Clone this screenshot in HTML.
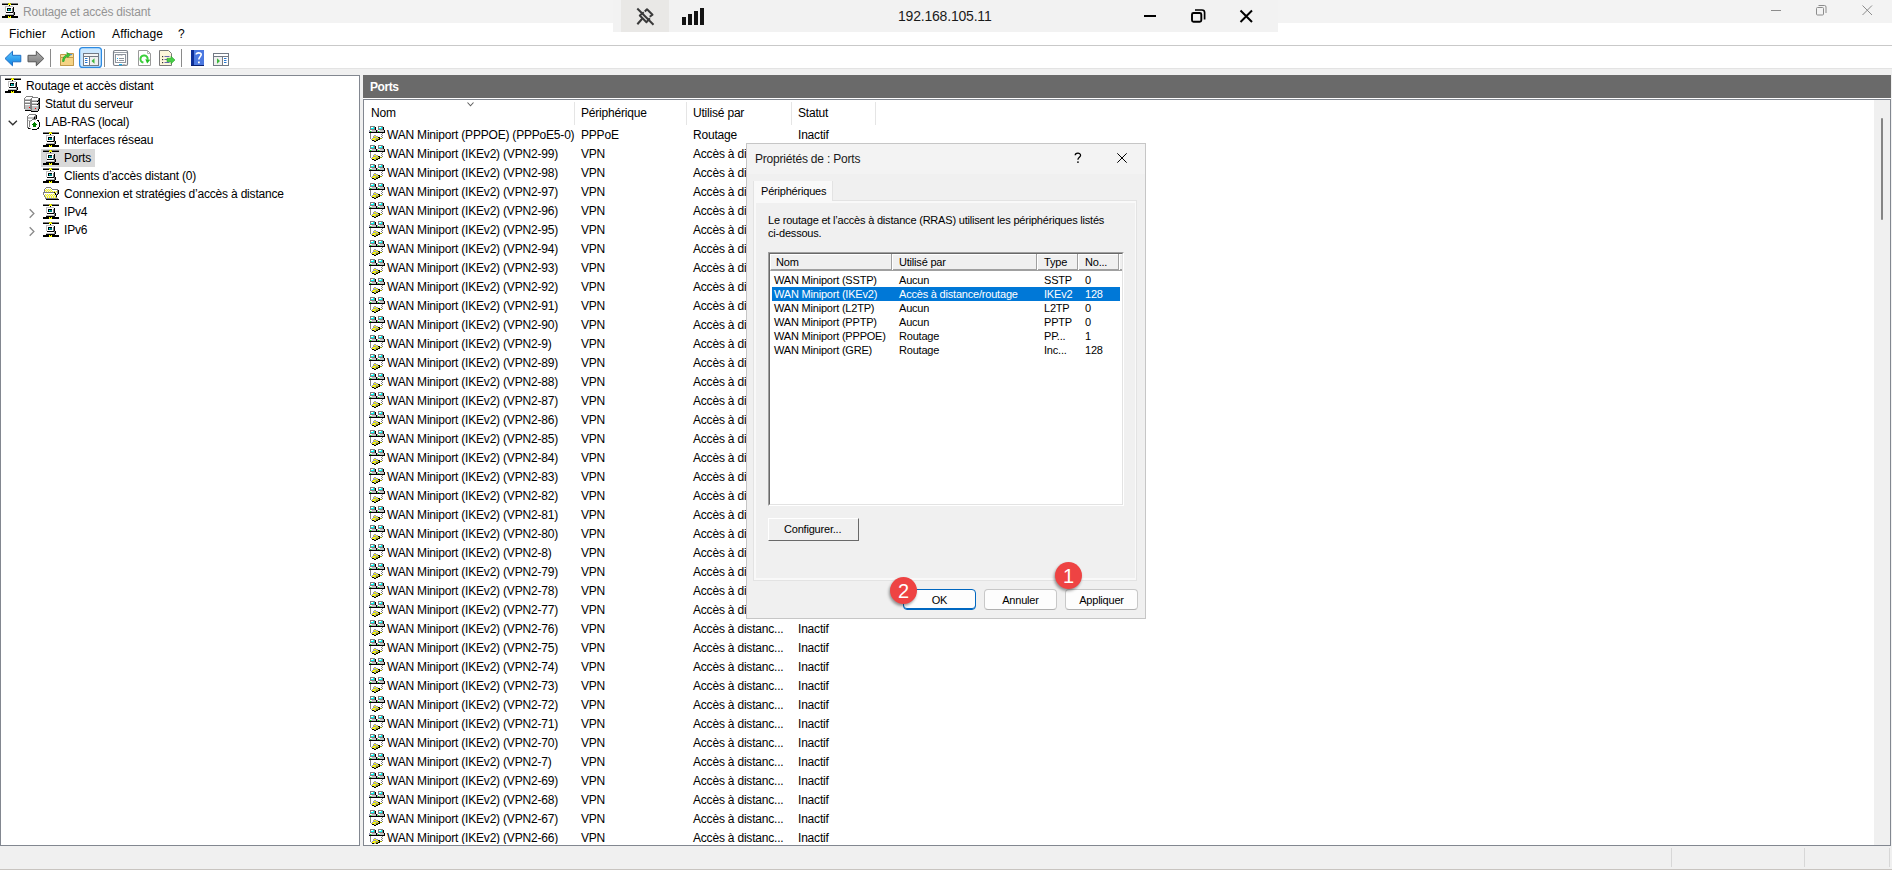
<!DOCTYPE html><html><head><meta charset="utf-8"><style>
*{margin:0;padding:0;box-sizing:border-box}
html,body{width:1892px;height:870px;overflow:hidden;background:#f0f0f0;font-family:"Liberation Sans",sans-serif;font-size:12px;color:#000}
.a{position:absolute}
.t{position:absolute;white-space:nowrap;line-height:16px;letter-spacing:-0.2px;font-variant-ligatures:none}
svg{position:absolute;overflow:visible}
</style></head><body>
<svg width="0" height="0" style="position:absolute">
<defs>
<symbol id="rras" viewBox="0 0 16 16" shape-rendering="crispEdges"><rect x="0" y="1" width="6" height="1" fill="#808080"/><rect x="6" y="1" width="1" height="1" fill="#a0a000"/><rect x="7" y="1" width="1" height="1" fill="#ffff00"/><rect x="8" y="1" width="1" height="1" fill="#a0a000"/><rect x="9" y="1" width="7" height="1" fill="#808080"/><rect x="0" y="2" width="6" height="1" fill="#000"/><rect x="6" y="2" width="3" height="1" fill="#ffff00"/><rect x="9" y="2" width="7" height="1" fill="#000"/><rect x="7" y="3" width="1" height="1" fill="#000"/><rect x="3" y="4" width="8" height="1" fill="#c0c0c0"/><rect x="3" y="5" width="1" height="1" fill="#c0c0c0"/><rect x="4" y="5" width="7" height="1" fill="#fff"/><rect x="11" y="5" width="1" height="1" fill="#000"/><rect x="3" y="6" width="1" height="1" fill="#c0c0c0"/><rect x="4" y="6" width="1" height="1" fill="#fff"/><rect x="5" y="6" width="4" height="1" fill="#000"/><rect x="9" y="6" width="1" height="1" fill="#fff"/><rect x="10" y="6" width="1" height="1" fill="#808080"/><rect x="11" y="6" width="1" height="1" fill="#000"/><rect x="3" y="7" width="1" height="1" fill="#c0c0c0"/><rect x="4" y="7" width="1" height="1" fill="#fff"/><rect x="5" y="7" width="1" height="1" fill="#000"/><rect x="6" y="7" width="1" height="1" fill="#00ffff"/><rect x="7" y="7" width="2" height="1" fill="#008080"/><rect x="9" y="7" width="1" height="1" fill="#fff"/><rect x="10" y="7" width="1" height="1" fill="#808080"/><rect x="11" y="7" width="1" height="1" fill="#000"/><rect x="3" y="8" width="1" height="1" fill="#c0c0c0"/><rect x="4" y="8" width="1" height="1" fill="#fff"/><rect x="5" y="8" width="1" height="1" fill="#000"/><rect x="6" y="8" width="3" height="1" fill="#008080"/><rect x="9" y="8" width="1" height="1" fill="#fff"/><rect x="10" y="8" width="1" height="1" fill="#808080"/><rect x="11" y="8" width="1" height="1" fill="#000"/><rect x="3" y="9" width="1" height="1" fill="#c0c0c0"/><rect x="4" y="9" width="6" height="1" fill="#fff"/><rect x="10" y="9" width="1" height="1" fill="#808080"/><rect x="11" y="9" width="1" height="1" fill="#000"/><rect x="4" y="10" width="7" height="1" fill="#000"/><rect x="11" y="10" width="1" height="1" fill="#808080"/><rect x="12" y="10" width="1" height="1" fill="#000"/><rect x="4" y="11" width="7" height="1" fill="#fff"/><rect x="11" y="11" width="1" height="1" fill="#808080"/><rect x="12" y="11" width="1" height="1" fill="#000"/><rect x="3" y="12" width="8" height="1" fill="#c0c0c0"/><rect x="11" y="12" width="1" height="1" fill="#808080"/><rect x="12" y="12" width="1" height="1" fill="#000"/><rect x="3" y="13" width="9" height="1" fill="#000"/><rect x="0" y="14" width="6" height="1" fill="#000"/><rect x="6" y="14" width="1" height="1" fill="#ffff00"/><rect x="7" y="14" width="1" height="1" fill="#000"/><rect x="8" y="14" width="1" height="1" fill="#ffff00"/><rect x="9" y="14" width="7" height="1" fill="#000"/><rect x="0" y="15" width="6" height="1" fill="#000"/><rect x="6" y="15" width="3" height="1" fill="#ffff00"/><rect x="9" y="15" width="7" height="1" fill="#000"/></symbol><symbol id="port" viewBox="0 0 16 17" shape-rendering="crispEdges"><rect x="1" y="1" width="5" height="1" fill="#808080"/><rect x="9" y="1" width="5" height="1" fill="#808080"/><rect x="1" y="2" width="1" height="1" fill="#808080"/><rect x="2" y="2" width="2" height="1" fill="#fff"/><rect x="4" y="2" width="1" height="1" fill="#00ffff"/><rect x="5" y="2" width="1" height="1" fill="#808080"/><rect x="6" y="2" width="1" height="1" fill="#000"/><rect x="9" y="2" width="1" height="1" fill="#808080"/><rect x="10" y="2" width="2" height="1" fill="#fff"/><rect x="12" y="2" width="1" height="1" fill="#00ffff"/><rect x="13" y="2" width="1" height="1" fill="#808080"/><rect x="14" y="2" width="1" height="1" fill="#000"/><rect x="1" y="3" width="1" height="1" fill="#808080"/><rect x="2" y="3" width="3" height="1" fill="#00ffff"/><rect x="5" y="3" width="1" height="1" fill="#808080"/><rect x="6" y="3" width="1" height="1" fill="#000"/><rect x="9" y="3" width="1" height="1" fill="#808080"/><rect x="10" y="3" width="3" height="1" fill="#00ffff"/><rect x="13" y="3" width="1" height="1" fill="#808080"/><rect x="14" y="3" width="1" height="1" fill="#000"/><rect x="1" y="4" width="5" height="1" fill="#808080"/><rect x="6" y="4" width="1" height="1" fill="#000"/><rect x="9" y="4" width="5" height="1" fill="#808080"/><rect x="14" y="4" width="1" height="1" fill="#000"/><rect x="0" y="5" width="1" height="1" fill="#9a9ab8"/><rect x="1" y="5" width="2" height="1" fill="#fff"/><rect x="3" y="5" width="4" height="1" fill="#c0c0c0"/><rect x="7" y="5" width="1" height="1" fill="#000"/><rect x="8" y="5" width="1" height="1" fill="#9a9ab8"/><rect x="9" y="5" width="2" height="1" fill="#fff"/><rect x="11" y="5" width="4" height="1" fill="#c0c0c0"/><rect x="15" y="5" width="1" height="1" fill="#000"/><rect x="0" y="6" width="1" height="1" fill="#9a9ab8"/><rect x="1" y="6" width="1" height="1" fill="#00ff00"/><rect x="2" y="6" width="1" height="1" fill="#9a9ab8"/><rect x="3" y="6" width="4" height="1" fill="#c0c0c0"/><rect x="7" y="6" width="1" height="1" fill="#000"/><rect x="8" y="6" width="1" height="1" fill="#9a9ab8"/><rect x="9" y="6" width="1" height="1" fill="#00ff00"/><rect x="10" y="6" width="1" height="1" fill="#9a9ab8"/><rect x="11" y="6" width="4" height="1" fill="#c0c0c0"/><rect x="15" y="6" width="1" height="1" fill="#000"/><rect x="0" y="7" width="16" height="1" fill="#000"/><rect x="1" y="8" width="1" height="1" fill="#808080"/><rect x="13" y="8" width="1" height="1" fill="#808080"/><rect x="1" y="9" width="1" height="1" fill="#808080"/><rect x="12" y="9" width="1" height="1" fill="#808080"/><rect x="1" y="10" width="1" height="1" fill="#808080"/><rect x="5" y="10" width="2" height="1" fill="#9a9ab8"/><rect x="13" y="10" width="1" height="1" fill="#808080"/><rect x="1" y="11" width="1" height="1" fill="#808080"/><rect x="4" y="11" width="1" height="1" fill="#9a9ab8"/><rect x="5" y="11" width="2" height="1" fill="#ffff00"/><rect x="7" y="11" width="2" height="1" fill="#9a9ab8"/><rect x="12" y="11" width="1" height="1" fill="#808080"/><rect x="1" y="12" width="1" height="1" fill="#808080"/><rect x="4" y="12" width="3" height="1" fill="#9a9ab8"/><rect x="7" y="12" width="2" height="1" fill="#ffff00"/><rect x="9" y="12" width="2" height="1" fill="#000"/><rect x="13" y="12" width="1" height="1" fill="#808080"/><rect x="1" y="13" width="1" height="1" fill="#808080"/><rect x="3" y="13" width="1" height="1" fill="#9a9ab8"/><rect x="4" y="13" width="3" height="1" fill="#ffff00"/><rect x="7" y="13" width="2" height="1" fill="#9a9ab8"/><rect x="9" y="13" width="1" height="1" fill="#ffff00"/><rect x="10" y="13" width="1" height="1" fill="#000"/><rect x="11" y="13" width="2" height="1" fill="#a0a000"/><rect x="2" y="14" width="1" height="1" fill="#9a9ab8"/><rect x="3" y="14" width="3" height="1" fill="#ffff00"/><rect x="6" y="14" width="1" height="1" fill="#9a9ab8"/><rect x="7" y="14" width="2" height="1" fill="#a0a000"/><rect x="9" y="14" width="2" height="1" fill="#000"/><rect x="3" y="15" width="2" height="1" fill="#000"/><rect x="5" y="15" width="1" height="1" fill="#9a9ab8"/><rect x="6" y="15" width="1" height="1" fill="#ffff00"/><rect x="7" y="15" width="2" height="1" fill="#000"/><rect x="5" y="16" width="2" height="1" fill="#000"/></symbol><symbol id="srvstat" viewBox="0 0 16 16" shape-rendering="crispEdges"><rect x="2" y="0" width="7" height="1" fill="#808080"/><rect x="1" y="1" width="1" height="1" fill="#808080"/><rect x="2" y="1" width="6" height="1" fill="#fff"/><rect x="8" y="1" width="6" height="1" fill="#808080"/><rect x="0" y="2" width="1" height="1" fill="#808080"/><rect x="1" y="2" width="6" height="1" fill="#fff"/><rect x="7" y="2" width="1" height="1" fill="#808080"/><rect x="8" y="2" width="6" height="1" fill="#fff"/><rect x="14" y="2" width="1" height="1" fill="#808080"/><rect x="15" y="2" width="1" height="1" fill="#000"/><rect x="0" y="3" width="1" height="1" fill="#808080"/><rect x="1" y="3" width="5" height="1" fill="#c0c0c0"/><rect x="6" y="3" width="2" height="1" fill="#808080"/><rect x="8" y="3" width="6" height="1" fill="#fff"/><rect x="14" y="3" width="1" height="1" fill="#808080"/><rect x="15" y="3" width="1" height="1" fill="#000"/><rect x="0" y="4" width="8" height="1" fill="#808080"/><rect x="8" y="4" width="6" height="1" fill="#c0c0c0"/><rect x="14" y="4" width="2" height="1" fill="#000"/><rect x="0" y="5" width="1" height="1" fill="#808080"/><rect x="1" y="5" width="5" height="1" fill="#fff"/><rect x="6" y="5" width="7" height="1" fill="#808080"/><rect x="13" y="5" width="1" height="1" fill="#000"/><rect x="14" y="5" width="1" height="1" fill="#808080"/><rect x="15" y="5" width="1" height="1" fill="#000"/><rect x="0" y="6" width="1" height="1" fill="#808080"/><rect x="1" y="6" width="5" height="1" fill="#c0c0c0"/><rect x="6" y="6" width="2" height="1" fill="#808080"/><rect x="8" y="6" width="6" height="1" fill="#fff"/><rect x="14" y="6" width="1" height="1" fill="#808080"/><rect x="15" y="6" width="1" height="1" fill="#000"/><rect x="0" y="7" width="8" height="1" fill="#808080"/><rect x="8" y="7" width="6" height="1" fill="#c0c0c0"/><rect x="14" y="7" width="2" height="1" fill="#000"/><rect x="0" y="8" width="1" height="1" fill="#808080"/><rect x="1" y="8" width="5" height="1" fill="#fff"/><rect x="6" y="8" width="7" height="1" fill="#808080"/><rect x="13" y="8" width="1" height="1" fill="#000"/><rect x="14" y="8" width="1" height="1" fill="#808080"/><rect x="15" y="8" width="1" height="1" fill="#000"/><rect x="0" y="9" width="1" height="1" fill="#808080"/><rect x="1" y="9" width="5" height="1" fill="#c0c0c0"/><rect x="6" y="9" width="2" height="1" fill="#808080"/><rect x="8" y="9" width="6" height="1" fill="#fff"/><rect x="14" y="9" width="1" height="1" fill="#808080"/><rect x="15" y="9" width="1" height="1" fill="#000"/><rect x="0" y="10" width="1" height="1" fill="#808080"/><rect x="1" y="10" width="5" height="1" fill="#c0c0c0"/><rect x="6" y="10" width="2" height="1" fill="#808080"/><rect x="8" y="10" width="6" height="1" fill="#c0c0c0"/><rect x="14" y="10" width="1" height="1" fill="#808080"/><rect x="15" y="10" width="1" height="1" fill="#000"/><rect x="0" y="11" width="1" height="1" fill="#808080"/><rect x="1" y="11" width="4" height="1" fill="#c0c0c0"/><rect x="5" y="11" width="1" height="1" fill="#ff0000"/><rect x="6" y="11" width="2" height="1" fill="#808080"/><rect x="8" y="11" width="6" height="1" fill="#c0c0c0"/><rect x="14" y="11" width="1" height="1" fill="#808080"/><rect x="15" y="11" width="1" height="1" fill="#000"/><rect x="0" y="12" width="1" height="1" fill="#808080"/><rect x="1" y="12" width="5" height="1" fill="#c0c0c0"/><rect x="6" y="12" width="2" height="1" fill="#808080"/><rect x="8" y="12" width="3" height="1" fill="#c0c0c0"/><rect x="11" y="12" width="1" height="1" fill="#ff0000"/><rect x="12" y="12" width="2" height="1" fill="#c0c0c0"/><rect x="14" y="12" width="1" height="1" fill="#808080"/><rect x="15" y="12" width="1" height="1" fill="#000"/><rect x="1" y="13" width="6" height="1" fill="#c0c0c0"/><rect x="7" y="13" width="1" height="1" fill="#808080"/><rect x="8" y="13" width="6" height="1" fill="#c0c0c0"/><rect x="14" y="13" width="1" height="1" fill="#000"/><rect x="1" y="14" width="6" height="1" fill="#000"/><rect x="7" y="14" width="1" height="1" fill="#808080"/><rect x="8" y="14" width="6" height="1" fill="#c0c0c0"/><rect x="14" y="14" width="1" height="1" fill="#000"/><rect x="7" y="15" width="7" height="1" fill="#000"/></symbol><symbol id="labras" viewBox="0 0 16 16" shape-rendering="crispEdges"><rect x="5" y="0" width="7" height="1" fill="#808080"/><rect x="4" y="1" width="1" height="1" fill="#808080"/><rect x="5" y="1" width="6" height="1" fill="#fff"/><rect x="11" y="1" width="1" height="1" fill="#808080"/><rect x="12" y="1" width="1" height="1" fill="#000"/><rect x="3" y="2" width="1" height="1" fill="#808080"/><rect x="4" y="2" width="6" height="1" fill="#fff"/><rect x="10" y="2" width="2" height="1" fill="#808080"/><rect x="12" y="2" width="1" height="1" fill="#000"/><rect x="3" y="3" width="1" height="1" fill="#808080"/><rect x="4" y="3" width="6" height="1" fill="#c0c0c0"/><rect x="10" y="3" width="1" height="1" fill="#000"/><rect x="11" y="3" width="1" height="1" fill="#808080"/><rect x="12" y="3" width="1" height="1" fill="#000"/><rect x="3" y="4" width="1" height="1" fill="#808080"/><rect x="4" y="4" width="5" height="1" fill="#c0c0c0"/><rect x="9" y="4" width="1" height="1" fill="#808080"/><rect x="10" y="4" width="1" height="1" fill="#000"/><rect x="11" y="4" width="1" height="1" fill="#808080"/><rect x="12" y="4" width="1" height="1" fill="#000"/><rect x="3" y="5" width="1" height="1" fill="#808080"/><rect x="4" y="5" width="4" height="1" fill="#fff"/><rect x="8" y="5" width="4" height="1" fill="#808080"/><rect x="3" y="6" width="1" height="1" fill="#808080"/><rect x="4" y="6" width="3" height="1" fill="#c0c0c0"/><rect x="7" y="6" width="1" height="1" fill="#808080"/><rect x="9" y="6" width="4" height="1" fill="#fff"/><rect x="13" y="6" width="2" height="1" fill="#000"/><rect x="3" y="7" width="1" height="1" fill="#808080"/><rect x="4" y="7" width="1" height="1" fill="#fff"/><rect x="5" y="7" width="1" height="1" fill="#808080"/><rect x="6" y="7" width="1" height="1" fill="#c0c0c0"/><rect x="7" y="7" width="7" height="1" fill="#fff"/><rect x="14" y="7" width="1" height="1" fill="#000"/><rect x="3" y="8" width="1" height="1" fill="#808080"/><rect x="4" y="8" width="1" height="1" fill="#fff"/><rect x="5" y="8" width="1" height="1" fill="#808080"/><rect x="6" y="8" width="4" height="1" fill="#fff"/><rect x="10" y="8" width="1" height="1" fill="#008000"/><rect x="11" y="8" width="4" height="1" fill="#fff"/><rect x="15" y="8" width="1" height="1" fill="#000"/><rect x="3" y="9" width="1" height="1" fill="#808080"/><rect x="4" y="9" width="1" height="1" fill="#fff"/><rect x="5" y="9" width="1" height="1" fill="#808080"/><rect x="6" y="9" width="3" height="1" fill="#fff"/><rect x="9" y="9" width="3" height="1" fill="#008000"/><rect x="12" y="9" width="3" height="1" fill="#fff"/><rect x="15" y="9" width="1" height="1" fill="#000"/><rect x="3" y="10" width="1" height="1" fill="#808080"/><rect x="4" y="10" width="1" height="1" fill="#fff"/><rect x="5" y="10" width="1" height="1" fill="#808080"/><rect x="6" y="10" width="2" height="1" fill="#fff"/><rect x="8" y="10" width="5" height="1" fill="#008000"/><rect x="13" y="10" width="2" height="1" fill="#fff"/><rect x="15" y="10" width="1" height="1" fill="#000"/><rect x="3" y="11" width="1" height="1" fill="#808080"/><rect x="4" y="11" width="1" height="1" fill="#fff"/><rect x="5" y="11" width="1" height="1" fill="#808080"/><rect x="6" y="11" width="3" height="1" fill="#fff"/><rect x="9" y="11" width="3" height="1" fill="#008000"/><rect x="12" y="11" width="3" height="1" fill="#fff"/><rect x="15" y="11" width="1" height="1" fill="#000"/><rect x="3" y="12" width="1" height="1" fill="#808080"/><rect x="4" y="12" width="1" height="1" fill="#fff"/><rect x="5" y="12" width="1" height="1" fill="#808080"/><rect x="6" y="12" width="3" height="1" fill="#fff"/><rect x="9" y="12" width="3" height="1" fill="#008000"/><rect x="12" y="12" width="3" height="1" fill="#fff"/><rect x="15" y="12" width="1" height="1" fill="#000"/><rect x="3" y="13" width="2" height="1" fill="#808080"/><rect x="5" y="13" width="9" height="1" fill="#fff"/><rect x="14" y="13" width="1" height="1" fill="#000"/><rect x="4" y="14" width="2" height="1" fill="#000"/><rect x="6" y="14" width="1" height="1" fill="#808080"/><rect x="7" y="14" width="6" height="1" fill="#fff"/><rect x="13" y="14" width="2" height="1" fill="#000"/><rect x="8" y="15" width="5" height="1" fill="#000"/></symbol><symbol id="folder" viewBox="0 0 16 16" shape-rendering="crispEdges"><rect x="3" y="2" width="5" height="1" fill="#808080"/><rect x="2" y="3" width="1" height="1" fill="#808080"/><rect x="3" y="3" width="5" height="1" fill="#fff"/><rect x="8" y="3" width="1" height="1" fill="#808080"/><rect x="1" y="4" width="1" height="1" fill="#808080"/><rect x="2" y="4" width="1" height="1" fill="#fff"/><rect x="3" y="4" width="1" height="1" fill="#ffff00"/><rect x="4" y="4" width="1" height="1" fill="#e4e4f0"/><rect x="5" y="4" width="1" height="1" fill="#ffff00"/><rect x="6" y="4" width="1" height="1" fill="#e4e4f0"/><rect x="7" y="4" width="1" height="1" fill="#ffff00"/><rect x="8" y="4" width="1" height="1" fill="#fff"/><rect x="9" y="4" width="6" height="1" fill="#808080"/><rect x="1" y="5" width="1" height="1" fill="#808080"/><rect x="2" y="5" width="1" height="1" fill="#ffff00"/><rect x="3" y="5" width="1" height="1" fill="#e4e4f0"/><rect x="4" y="5" width="1" height="1" fill="#ffff00"/><rect x="5" y="5" width="1" height="1" fill="#e4e4f0"/><rect x="6" y="5" width="1" height="1" fill="#ffff00"/><rect x="7" y="5" width="1" height="1" fill="#e4e4f0"/><rect x="8" y="5" width="1" height="1" fill="#ffff00"/><rect x="9" y="5" width="5" height="1" fill="#fff"/><rect x="14" y="5" width="1" height="1" fill="#808080"/><rect x="15" y="5" width="1" height="1" fill="#000"/><rect x="1" y="6" width="1" height="1" fill="#808080"/><rect x="2" y="6" width="1" height="1" fill="#e4e4f0"/><rect x="3" y="6" width="1" height="1" fill="#ffff00"/><rect x="4" y="6" width="1" height="1" fill="#e4e4f0"/><rect x="5" y="6" width="1" height="1" fill="#ffff00"/><rect x="6" y="6" width="1" height="1" fill="#e4e4f0"/><rect x="7" y="6" width="1" height="1" fill="#ffff00"/><rect x="8" y="6" width="1" height="1" fill="#e4e4f0"/><rect x="9" y="6" width="1" height="1" fill="#ffff00"/><rect x="10" y="6" width="1" height="1" fill="#e4e4f0"/><rect x="11" y="6" width="1" height="1" fill="#ffff00"/><rect x="12" y="6" width="1" height="1" fill="#e4e4f0"/><rect x="13" y="6" width="1" height="1" fill="#ffff00"/><rect x="14" y="6" width="1" height="1" fill="#808080"/><rect x="15" y="6" width="1" height="1" fill="#000"/><rect x="0" y="7" width="11" height="1" fill="#808080"/><rect x="11" y="7" width="1" height="1" fill="#000"/><rect x="12" y="7" width="1" height="1" fill="#ffff00"/><rect x="13" y="7" width="1" height="1" fill="#e4e4f0"/><rect x="14" y="7" width="1" height="1" fill="#808080"/><rect x="15" y="7" width="1" height="1" fill="#000"/><rect x="0" y="8" width="1" height="1" fill="#808080"/><rect x="1" y="8" width="10" height="1" fill="#fff"/><rect x="11" y="8" width="1" height="1" fill="#ffff00"/><rect x="12" y="8" width="1" height="1" fill="#000"/><rect x="13" y="8" width="1" height="1" fill="#fff"/><rect x="14" y="8" width="1" height="1" fill="#808080"/><rect x="15" y="8" width="1" height="1" fill="#000"/><rect x="0" y="9" width="1" height="1" fill="#808080"/><rect x="1" y="9" width="1" height="1" fill="#fff"/><rect x="2" y="9" width="1" height="1" fill="#ffff00"/><rect x="3" y="9" width="1" height="1" fill="#e4e4f0"/><rect x="4" y="9" width="1" height="1" fill="#ffff00"/><rect x="5" y="9" width="1" height="1" fill="#e4e4f0"/><rect x="6" y="9" width="1" height="1" fill="#ffff00"/><rect x="7" y="9" width="1" height="1" fill="#e4e4f0"/><rect x="8" y="9" width="1" height="1" fill="#ffff00"/><rect x="9" y="9" width="1" height="1" fill="#e4e4f0"/><rect x="10" y="9" width="1" height="1" fill="#ffff00"/><rect x="11" y="9" width="1" height="1" fill="#e4e4f0"/><rect x="12" y="9" width="1" height="1" fill="#000"/><rect x="13" y="9" width="1" height="1" fill="#808080"/><rect x="14" y="9" width="1" height="1" fill="#000"/><rect x="1" y="10" width="1" height="1" fill="#808080"/><rect x="2" y="10" width="1" height="1" fill="#e4e4f0"/><rect x="3" y="10" width="1" height="1" fill="#ffff00"/><rect x="4" y="10" width="1" height="1" fill="#e4e4f0"/><rect x="5" y="10" width="1" height="1" fill="#ffff00"/><rect x="6" y="10" width="1" height="1" fill="#e4e4f0"/><rect x="7" y="10" width="1" height="1" fill="#ffff00"/><rect x="8" y="10" width="1" height="1" fill="#e4e4f0"/><rect x="9" y="10" width="1" height="1" fill="#ffff00"/><rect x="10" y="10" width="1" height="1" fill="#e4e4f0"/><rect x="11" y="10" width="1" height="1" fill="#ffff00"/><rect x="12" y="10" width="1" height="1" fill="#e4e4f0"/><rect x="13" y="10" width="1" height="1" fill="#000"/><rect x="1" y="11" width="1" height="1" fill="#808080"/><rect x="2" y="11" width="1" height="1" fill="#ffff00"/><rect x="3" y="11" width="1" height="1" fill="#e4e4f0"/><rect x="4" y="11" width="1" height="1" fill="#ffff00"/><rect x="5" y="11" width="1" height="1" fill="#e4e4f0"/><rect x="6" y="11" width="1" height="1" fill="#ffff00"/><rect x="7" y="11" width="1" height="1" fill="#e4e4f0"/><rect x="8" y="11" width="1" height="1" fill="#ffff00"/><rect x="9" y="11" width="1" height="1" fill="#e4e4f0"/><rect x="10" y="11" width="1" height="1" fill="#ffff00"/><rect x="11" y="11" width="1" height="1" fill="#e4e4f0"/><rect x="12" y="11" width="1" height="1" fill="#ffff00"/><rect x="13" y="11" width="1" height="1" fill="#000"/><rect x="2" y="12" width="1" height="1" fill="#808080"/><rect x="3" y="12" width="1" height="1" fill="#e4e4f0"/><rect x="4" y="12" width="1" height="1" fill="#ffff00"/><rect x="5" y="12" width="1" height="1" fill="#e4e4f0"/><rect x="6" y="12" width="1" height="1" fill="#ffff00"/><rect x="7" y="12" width="1" height="1" fill="#e4e4f0"/><rect x="8" y="12" width="1" height="1" fill="#ffff00"/><rect x="9" y="12" width="1" height="1" fill="#e4e4f0"/><rect x="10" y="12" width="1" height="1" fill="#ffff00"/><rect x="11" y="12" width="1" height="1" fill="#e4e4f0"/><rect x="12" y="12" width="1" height="1" fill="#ffff00"/><rect x="13" y="12" width="1" height="1" fill="#808080"/><rect x="2" y="13" width="13" height="1" fill="#808080"/><rect x="3" y="14" width="13" height="1" fill="#000"/></symbol>
</defs>
</svg>
<div class="a" style="left:0;top:0;width:1892px;height:23px;background:#f3f3f3"></div>
<svg style="left:2px;top:2px" width="16" height="16"><use href="#rras"/></svg>
<div class="t" style="left:23px;top:4px;color:#959595;font-size:12px">Routage et accès distant</div>
<svg style="left:1771px;top:5px" width="11" height="11" viewBox="0 0 11 11"><path d="M0 5.5H10" stroke="#8c8c8c" stroke-width="1"/></svg>
<svg style="left:1816px;top:5px" width="11" height="11" viewBox="0 0 11 11"><rect x="0.5" y="2.5" width="7" height="7.5" rx="1" fill="none" stroke="#8c8c8c"/><path d="M2.5 0.5H8.5Q10 0.5 10 2V8" fill="none" stroke="#8c8c8c"/></svg>
<svg style="left:1862px;top:5px" width="11" height="11" viewBox="0 0 11 11"><path d="M0.5 0.5L10 10M10 0.5L0.5 10" stroke="#8c8c8c" stroke-width="1"/></svg>
<div class="a" style="left:0;top:23px;width:1892px;height:22px;background:#fff"></div>
<div class="t" style="left:9px;top:26px;letter-spacing:0.15px">Fichier</div>
<div class="t" style="left:61px;top:26px;letter-spacing:0.15px">Action</div>
<div class="t" style="left:112px;top:26px;letter-spacing:0.15px">Affichage</div>
<div class="t" style="left:178px;top:26px;letter-spacing:0.15px">?</div>
<div class="a" style="left:0;top:45px;width:1892px;height:1px;background:#c9c9c9"></div>
<div class="a" style="left:0;top:46px;width:1892px;height:22px;background:#fff"></div>
<div class="a" style="left:0;top:68px;width:1892px;height:1px;background:#e3e3e3"></div>
<div class="a" style="left:613px;top:0;width:665px;height:32px;background:#f2f2f2"></div>
<div class="a" style="left:621px;top:0;width:48px;height:32px;background:#e9e8e6"></div>
<svg style="left:0;top:46px" width="240" height="22" viewBox="0 46 240 22">
<defs>
<linearGradient id="gb" x1="0" y1="0" x2="0" y2="1"><stop offset="0" stop-color="#5fc8ff"/><stop offset="1" stop-color="#0a7de0"/></linearGradient>
<linearGradient id="gg" x1="0" y1="0" x2="0" y2="1"><stop offset="0" stop-color="#b0b0b0"/><stop offset="1" stop-color="#7a7a7a"/></linearGradient>
</defs>
<path d="M5 58.5L12.5 51.2V55.3H20.8V61.8H12.5V65.8Z" fill="url(#gb)" stroke="#1f6fc5" stroke-width="1" stroke-linejoin="round"/>
<path d="M43.8 58.5L36.3 51.2V55.3H28V61.8H36.3V65.8Z" fill="url(#gg)" stroke="#555" stroke-width="1" stroke-linejoin="round"/>
<rect x="50" y="49" width="1" height="18" fill="#8a8a8a"/>
<!-- folder up -->
<path d="M60.5 54.5H66L67 53.5H73.5V65.5H60.5Z" fill="#f7dc9a" stroke="#c29a4c"/>
<path d="M60.5 57.5H73.5V65.5H60.5Z" fill="#f5d385" stroke="#c29a4c"/>
<path d="M62.5 61.5C62.5 58 64 55.5 67.5 54.5L66.8 52.5L70.5 54.8L67.8 57.5L67.4 56C65.5 56.8 64.5 58.5 64 61.5Z" fill="#3cc83c" stroke="#1c9a1c" stroke-width="0.6"/>
<ellipse cx="71" cy="54.6" rx="1.4" ry="0.7" fill="#3a8ee8"/>
<!-- highlighted show/hide tree -->
<rect x="79.6" y="47.6" width="21.8" height="19.8" rx="3" fill="#cce8ff" stroke="#2b8ae2" stroke-width="1.25"/>
<rect x="83.5" y="53.5" width="15" height="12" fill="#fff" stroke="#737a85"/>
<rect x="84" y="54" width="14" height="2" fill="#f4f4f4"/>
<path d="M84 56.5H98" stroke="#737a85"/>
<path d="M89.5 57V65" stroke="#737a85"/>
<rect x="85" y="58" width="2.5" height="1" fill="#2a78d0"/><rect x="85" y="60" width="2.5" height="1" fill="#2a78d0"/><rect x="85" y="62" width="2.5" height="1" fill="#2a78d0"/>
<rect x="90" y="57" width="8" height="8" fill="#f0f0f0"/>
<path d="M91.5 61L94.5 58.3V63.7Z" fill="#3cb83c"/>
<rect x="104" y="49" width="1" height="18" fill="#8a8a8a"/>
<!-- properties -->
<rect x="113.5" y="50.5" width="14" height="15" rx="1.5" fill="#fff" stroke="#7c818a" stroke-width="1.2"/>
<path d="M114 52.5H127" stroke="#9aa0a8"/>
<rect x="115.5" y="54.5" width="10" height="8" fill="#fff" stroke="#8f959e"/>
<rect x="117.5" y="54" width="2" height="1.5" fill="#8f959e"/><rect x="120.5" y="54" width="2" height="1.5" fill="#8f959e"/>
<rect x="117" y="58" width="1" height="1" fill="#1ab0f0"/><rect x="119" y="58" width="5" height="1" fill="#8f959e"/>
<rect x="117" y="60" width="1" height="1" fill="#8f959e"/><rect x="119" y="60" width="5" height="1" fill="#8f959e"/>
<rect x="119" y="64" width="3" height="1.2" fill="#1ab0f0"/><rect x="122.5" y="64" width="3" height="1.2" fill="#b8b8b8"/>
<!-- refresh -->
<path d="M138.5 50.5H147.5L150.5 53.5V65.5H138.5Z" fill="#fff" stroke="#9a9a9a"/>
<path d="M147.5 50.5V53.5H150.5" fill="none" stroke="#b0b0b0"/>
<path d="M143.4 62.6A3.6 3.6 0 1 1 147.6 59.6" fill="none" stroke="#3cd03c" stroke-width="2"/>
<path d="M145.3 59.2L150.3 59.8L147.2 63.6Z" fill="#22c022"/>
<!-- export -->
<path d="M159.5 50.5H168.5L171.5 53.5V65.5H159.5Z" fill="#fdf6dc" stroke="#7a7a7a"/>
<rect x="162" y="56" width="1.2" height="1.2" fill="#333"/><rect x="164.5" y="56" width="5" height="1" fill="#6a6ab0"/>
<rect x="162" y="59" width="1.2" height="1.2" fill="#333"/><rect x="164.5" y="59" width="5" height="1" fill="#6a6ab0"/>
<rect x="162" y="62" width="1.2" height="1.2" fill="#333"/><rect x="164.5" y="62" width="5" height="1" fill="#6a6ab0"/>
<path d="M167 58.3H171V56.2L175 60L171 63.8V61.7H167Z" fill="#46d046" stroke="#2aa02a" stroke-width="0.6"/>
<rect x="181" y="49" width="1" height="18" fill="#8a8a8a"/>
<!-- help -->
<rect x="191" y="50" width="13" height="16" fill="#2a55c8"/>
<rect x="191" y="50" width="3" height="16" fill="#0e2f98"/>
<rect x="194" y="50" width="10" height="16" fill="#4b78e0"/>
<rect x="191" y="65" width="13" height="1" fill="#0a2070"/>
<path d="M196.2 54.5C196.2 52.5 201.2 52.2 201.2 54.6C201.2 56.6 198.8 57 198.8 59.5" fill="none" stroke="#fff" stroke-width="1.6"/>
<rect x="198" y="61.5" width="1.8" height="1.8" fill="#fff"/>
<!-- action pane -->
<rect x="213.5" y="53.5" width="15" height="12" fill="#fff" stroke="#737a85"/>
<path d="M214 56.5H228" stroke="#737a85"/>
<path d="M222.5 57V65" stroke="#737a85"/>
<rect x="214" y="57" width="8" height="8" fill="#f0f0f0"/>
<path d="M217 58.3L220 61L217 63.7Z" fill="#3cb83c"/>
<rect x="224" y="58" width="2.5" height="1" fill="#2a78d0"/><rect x="224" y="60" width="2.5" height="1" fill="#2a78d0"/><rect x="224" y="62" width="2.5" height="1" fill="#2a78d0"/>
</svg>
<svg style="left:630px;top:4px" width="80" height="26" viewBox="630 4 80 26">
<g stroke="#3a3a3a" stroke-width="2" fill="none" stroke-linecap="square" stroke-linejoin="round">
<path d="M638 9.2L652.8 24"/>
<path d="M645.5 10.8L647 9.2L652.5 14.7L650.5 16.2"/>
<path d="M643 12.8L639.8 15.5L646.5 22.2L649.2 19"/>
<path d="M641.5 19.5L638 23.5"/>
</g>
<rect x="682" y="17" width="4" height="8" fill="#141414"/>
<rect x="688" y="14" width="4" height="11" fill="#141414"/>
<rect x="694" y="11" width="4" height="14" fill="#141414"/>
<rect x="700" y="8" width="4" height="17" fill="#141414"/>
</svg>
<svg style="left:1140px;top:4px" width="120" height="24" viewBox="1140 4 120 24">
<path d="M1144 16H1156" stroke="#000" stroke-width="2"/>
<rect x="1192" y="13" width="9.3" height="8.8" rx="1.5" fill="none" stroke="#000" stroke-width="1.9"/>
<path d="M1195 10H1202Q1204.6 10 1204.6 12.6V19.5" fill="none" stroke="#000" stroke-width="1.7"/>
<path d="M1240.5 10.5L1252 22M1252 10.5L1240.5 22" stroke="#000" stroke-width="2"/>
</svg>
<div class="t" style="left:898px;top:8px;font-size:14px;letter-spacing:-0.2px;color:#1a1a1a">192.168.105.11</div>
<div class="a" style="left:0;top:75px;width:360px;height:771px;background:#fff;border:1px solid #828790"></div>
<div class="a" style="left:41px;top:149px;width:54px;height:18px;background:#d9d9d9"></div>
<svg style="left:5px;top:77px" width="16" height="16"><use href="#rras"/></svg>
<div class="t" style="left:26px;top:78px">Routage et accès distant</div>
<svg style="left:24px;top:96px" width="16" height="16"><use href="#srvstat"/></svg>
<div class="t" style="left:45px;top:96px">Statut du serveur</div>
<svg style="left:8px;top:120px" width="10" height="6" viewBox="0 0 10 6"><path d="M0.7 0.7L4.8 4.8L8.9 0.7" fill="none" stroke="#303030" stroke-width="1.3"/></svg>
<svg style="left:24px;top:114px" width="16" height="16"><use href="#labras"/></svg>
<div class="t" style="left:45px;top:114px">LAB-RAS (local)</div>
<svg style="left:43px;top:131px" width="16" height="16"><use href="#rras"/></svg>
<div class="t" style="left:64px;top:132px">Interfaces réseau</div>
<svg style="left:43px;top:149px" width="16" height="16"><use href="#rras"/></svg>
<div class="t" style="left:64px;top:150px">Ports</div>
<svg style="left:43px;top:167px" width="16" height="16"><use href="#rras"/></svg>
<div class="t" style="left:64px;top:168px">Clients d’accès distant (0)</div>
<svg style="left:43px;top:185px" width="16" height="16"><use href="#folder"/></svg>
<div class="t" style="left:64px;top:186px">Connexion et stratégies d’accès à distance</div>
<svg style="left:29px;top:208px" width="6" height="11" viewBox="0 0 6 11"><path d="M0.7 1.2L4.9 5.5L0.7 9.8" fill="none" stroke="#8a8a8a" stroke-width="1.3"/></svg>
<svg style="left:43px;top:203px" width="16" height="16"><use href="#rras"/></svg>
<div class="t" style="left:64px;top:204px">IPv4</div>
<svg style="left:29px;top:226px" width="6" height="11" viewBox="0 0 6 11"><path d="M0.7 1.2L4.9 5.5L0.7 9.8" fill="none" stroke="#8a8a8a" stroke-width="1.3"/></svg>
<svg style="left:43px;top:221px" width="16" height="16"><use href="#rras"/></svg>
<div class="t" style="left:64px;top:222px">IPv6</div>
<div class="a" style="left:363px;top:75px;width:1528px;height:23px;background:#6a6a6a"></div>
<div class="t" style="left:370px;top:79px;color:#fff;font-weight:bold;font-size:12px;letter-spacing:-0.45px">Ports</div>
<div class="a" style="left:363px;top:98px;width:1528px;height:1px;background:#fff"></div>
<div class="a" style="left:363px;top:99px;width:1528px;height:747px;background:#fff;border:1px solid #828790;overflow:hidden"></div>
<div class="a" style="left:574px;top:102px;width:1px;height:23px;background:#e5e5e5"></div>
<div class="a" style="left:686px;top:102px;width:1px;height:23px;background:#e5e5e5"></div>
<div class="a" style="left:791px;top:102px;width:1px;height:23px;background:#e5e5e5"></div>
<div class="a" style="left:875px;top:102px;width:1px;height:23px;background:#e5e5e5"></div>
<div class="t" style="left:371px;top:105px">Nom</div>
<div class="t" style="left:581px;top:105px">Périphérique</div>
<div class="t" style="left:693px;top:105px">Utilisé par</div>
<div class="t" style="left:798px;top:105px">Statut</div>
<svg style="left:467px;top:102px" width="8" height="5" viewBox="0 0 8 5"><path d="M0.5 0.5L3.5 3.8L6.5 0.5" fill="none" stroke="#606060" stroke-width="1.1"/></svg>
<div class="a" style="left:0;top:0;width:1892px;height:870px;clip-path:inset(100px 18px 26px 364px)">
<svg style="left:369px;top:125px" width="16" height="17"><use href="#port"/></svg>
<div class="t" style="left:387px;top:127px">WAN Miniport (PPPOE) (PPPoE5-0)</div>
<div class="t" style="left:581px;top:127px">PPPoE</div>
<div class="t" style="left:693px;top:127px">Routage</div>
<div class="t" style="left:798px;top:127px">Inactif</div>
<svg style="left:369px;top:144px" width="16" height="17"><use href="#port"/></svg>
<div class="t" style="left:387px;top:146px">WAN Miniport (IKEv2) (VPN2-99)</div>
<div class="t" style="left:581px;top:146px">VPN</div>
<div class="t" style="left:693px;top:146px">Accès à distanc...</div>
<div class="t" style="left:798px;top:146px">Inactif</div>
<svg style="left:369px;top:163px" width="16" height="17"><use href="#port"/></svg>
<div class="t" style="left:387px;top:165px">WAN Miniport (IKEv2) (VPN2-98)</div>
<div class="t" style="left:581px;top:165px">VPN</div>
<div class="t" style="left:693px;top:165px">Accès à distanc...</div>
<div class="t" style="left:798px;top:165px">Inactif</div>
<svg style="left:369px;top:182px" width="16" height="17"><use href="#port"/></svg>
<div class="t" style="left:387px;top:184px">WAN Miniport (IKEv2) (VPN2-97)</div>
<div class="t" style="left:581px;top:184px">VPN</div>
<div class="t" style="left:693px;top:184px">Accès à distanc...</div>
<div class="t" style="left:798px;top:184px">Inactif</div>
<svg style="left:369px;top:201px" width="16" height="17"><use href="#port"/></svg>
<div class="t" style="left:387px;top:203px">WAN Miniport (IKEv2) (VPN2-96)</div>
<div class="t" style="left:581px;top:203px">VPN</div>
<div class="t" style="left:693px;top:203px">Accès à distanc...</div>
<div class="t" style="left:798px;top:203px">Inactif</div>
<svg style="left:369px;top:220px" width="16" height="17"><use href="#port"/></svg>
<div class="t" style="left:387px;top:222px">WAN Miniport (IKEv2) (VPN2-95)</div>
<div class="t" style="left:581px;top:222px">VPN</div>
<div class="t" style="left:693px;top:222px">Accès à distanc...</div>
<div class="t" style="left:798px;top:222px">Inactif</div>
<svg style="left:369px;top:239px" width="16" height="17"><use href="#port"/></svg>
<div class="t" style="left:387px;top:241px">WAN Miniport (IKEv2) (VPN2-94)</div>
<div class="t" style="left:581px;top:241px">VPN</div>
<div class="t" style="left:693px;top:241px">Accès à distanc...</div>
<div class="t" style="left:798px;top:241px">Inactif</div>
<svg style="left:369px;top:258px" width="16" height="17"><use href="#port"/></svg>
<div class="t" style="left:387px;top:260px">WAN Miniport (IKEv2) (VPN2-93)</div>
<div class="t" style="left:581px;top:260px">VPN</div>
<div class="t" style="left:693px;top:260px">Accès à distanc...</div>
<div class="t" style="left:798px;top:260px">Inactif</div>
<svg style="left:369px;top:277px" width="16" height="17"><use href="#port"/></svg>
<div class="t" style="left:387px;top:279px">WAN Miniport (IKEv2) (VPN2-92)</div>
<div class="t" style="left:581px;top:279px">VPN</div>
<div class="t" style="left:693px;top:279px">Accès à distanc...</div>
<div class="t" style="left:798px;top:279px">Inactif</div>
<svg style="left:369px;top:296px" width="16" height="17"><use href="#port"/></svg>
<div class="t" style="left:387px;top:298px">WAN Miniport (IKEv2) (VPN2-91)</div>
<div class="t" style="left:581px;top:298px">VPN</div>
<div class="t" style="left:693px;top:298px">Accès à distanc...</div>
<div class="t" style="left:798px;top:298px">Inactif</div>
<svg style="left:369px;top:315px" width="16" height="17"><use href="#port"/></svg>
<div class="t" style="left:387px;top:317px">WAN Miniport (IKEv2) (VPN2-90)</div>
<div class="t" style="left:581px;top:317px">VPN</div>
<div class="t" style="left:693px;top:317px">Accès à distanc...</div>
<div class="t" style="left:798px;top:317px">Inactif</div>
<svg style="left:369px;top:334px" width="16" height="17"><use href="#port"/></svg>
<div class="t" style="left:387px;top:336px">WAN Miniport (IKEv2) (VPN2-9)</div>
<div class="t" style="left:581px;top:336px">VPN</div>
<div class="t" style="left:693px;top:336px">Accès à distanc...</div>
<div class="t" style="left:798px;top:336px">Inactif</div>
<svg style="left:369px;top:353px" width="16" height="17"><use href="#port"/></svg>
<div class="t" style="left:387px;top:355px">WAN Miniport (IKEv2) (VPN2-89)</div>
<div class="t" style="left:581px;top:355px">VPN</div>
<div class="t" style="left:693px;top:355px">Accès à distanc...</div>
<div class="t" style="left:798px;top:355px">Inactif</div>
<svg style="left:369px;top:372px" width="16" height="17"><use href="#port"/></svg>
<div class="t" style="left:387px;top:374px">WAN Miniport (IKEv2) (VPN2-88)</div>
<div class="t" style="left:581px;top:374px">VPN</div>
<div class="t" style="left:693px;top:374px">Accès à distanc...</div>
<div class="t" style="left:798px;top:374px">Inactif</div>
<svg style="left:369px;top:391px" width="16" height="17"><use href="#port"/></svg>
<div class="t" style="left:387px;top:393px">WAN Miniport (IKEv2) (VPN2-87)</div>
<div class="t" style="left:581px;top:393px">VPN</div>
<div class="t" style="left:693px;top:393px">Accès à distanc...</div>
<div class="t" style="left:798px;top:393px">Inactif</div>
<svg style="left:369px;top:410px" width="16" height="17"><use href="#port"/></svg>
<div class="t" style="left:387px;top:412px">WAN Miniport (IKEv2) (VPN2-86)</div>
<div class="t" style="left:581px;top:412px">VPN</div>
<div class="t" style="left:693px;top:412px">Accès à distanc...</div>
<div class="t" style="left:798px;top:412px">Inactif</div>
<svg style="left:369px;top:429px" width="16" height="17"><use href="#port"/></svg>
<div class="t" style="left:387px;top:431px">WAN Miniport (IKEv2) (VPN2-85)</div>
<div class="t" style="left:581px;top:431px">VPN</div>
<div class="t" style="left:693px;top:431px">Accès à distanc...</div>
<div class="t" style="left:798px;top:431px">Inactif</div>
<svg style="left:369px;top:448px" width="16" height="17"><use href="#port"/></svg>
<div class="t" style="left:387px;top:450px">WAN Miniport (IKEv2) (VPN2-84)</div>
<div class="t" style="left:581px;top:450px">VPN</div>
<div class="t" style="left:693px;top:450px">Accès à distanc...</div>
<div class="t" style="left:798px;top:450px">Inactif</div>
<svg style="left:369px;top:467px" width="16" height="17"><use href="#port"/></svg>
<div class="t" style="left:387px;top:469px">WAN Miniport (IKEv2) (VPN2-83)</div>
<div class="t" style="left:581px;top:469px">VPN</div>
<div class="t" style="left:693px;top:469px">Accès à distanc...</div>
<div class="t" style="left:798px;top:469px">Inactif</div>
<svg style="left:369px;top:486px" width="16" height="17"><use href="#port"/></svg>
<div class="t" style="left:387px;top:488px">WAN Miniport (IKEv2) (VPN2-82)</div>
<div class="t" style="left:581px;top:488px">VPN</div>
<div class="t" style="left:693px;top:488px">Accès à distanc...</div>
<div class="t" style="left:798px;top:488px">Inactif</div>
<svg style="left:369px;top:505px" width="16" height="17"><use href="#port"/></svg>
<div class="t" style="left:387px;top:507px">WAN Miniport (IKEv2) (VPN2-81)</div>
<div class="t" style="left:581px;top:507px">VPN</div>
<div class="t" style="left:693px;top:507px">Accès à distanc...</div>
<div class="t" style="left:798px;top:507px">Inactif</div>
<svg style="left:369px;top:524px" width="16" height="17"><use href="#port"/></svg>
<div class="t" style="left:387px;top:526px">WAN Miniport (IKEv2) (VPN2-80)</div>
<div class="t" style="left:581px;top:526px">VPN</div>
<div class="t" style="left:693px;top:526px">Accès à distanc...</div>
<div class="t" style="left:798px;top:526px">Inactif</div>
<svg style="left:369px;top:543px" width="16" height="17"><use href="#port"/></svg>
<div class="t" style="left:387px;top:545px">WAN Miniport (IKEv2) (VPN2-8)</div>
<div class="t" style="left:581px;top:545px">VPN</div>
<div class="t" style="left:693px;top:545px">Accès à distanc...</div>
<div class="t" style="left:798px;top:545px">Inactif</div>
<svg style="left:369px;top:562px" width="16" height="17"><use href="#port"/></svg>
<div class="t" style="left:387px;top:564px">WAN Miniport (IKEv2) (VPN2-79)</div>
<div class="t" style="left:581px;top:564px">VPN</div>
<div class="t" style="left:693px;top:564px">Accès à distanc...</div>
<div class="t" style="left:798px;top:564px">Inactif</div>
<svg style="left:369px;top:581px" width="16" height="17"><use href="#port"/></svg>
<div class="t" style="left:387px;top:583px">WAN Miniport (IKEv2) (VPN2-78)</div>
<div class="t" style="left:581px;top:583px">VPN</div>
<div class="t" style="left:693px;top:583px">Accès à distanc...</div>
<div class="t" style="left:798px;top:583px">Inactif</div>
<svg style="left:369px;top:600px" width="16" height="17"><use href="#port"/></svg>
<div class="t" style="left:387px;top:602px">WAN Miniport (IKEv2) (VPN2-77)</div>
<div class="t" style="left:581px;top:602px">VPN</div>
<div class="t" style="left:693px;top:602px">Accès à distanc...</div>
<div class="t" style="left:798px;top:602px">Inactif</div>
<svg style="left:369px;top:619px" width="16" height="17"><use href="#port"/></svg>
<div class="t" style="left:387px;top:621px">WAN Miniport (IKEv2) (VPN2-76)</div>
<div class="t" style="left:581px;top:621px">VPN</div>
<div class="t" style="left:693px;top:621px">Accès à distanc...</div>
<div class="t" style="left:798px;top:621px">Inactif</div>
<svg style="left:369px;top:638px" width="16" height="17"><use href="#port"/></svg>
<div class="t" style="left:387px;top:640px">WAN Miniport (IKEv2) (VPN2-75)</div>
<div class="t" style="left:581px;top:640px">VPN</div>
<div class="t" style="left:693px;top:640px">Accès à distanc...</div>
<div class="t" style="left:798px;top:640px">Inactif</div>
<svg style="left:369px;top:657px" width="16" height="17"><use href="#port"/></svg>
<div class="t" style="left:387px;top:659px">WAN Miniport (IKEv2) (VPN2-74)</div>
<div class="t" style="left:581px;top:659px">VPN</div>
<div class="t" style="left:693px;top:659px">Accès à distanc...</div>
<div class="t" style="left:798px;top:659px">Inactif</div>
<svg style="left:369px;top:676px" width="16" height="17"><use href="#port"/></svg>
<div class="t" style="left:387px;top:678px">WAN Miniport (IKEv2) (VPN2-73)</div>
<div class="t" style="left:581px;top:678px">VPN</div>
<div class="t" style="left:693px;top:678px">Accès à distanc...</div>
<div class="t" style="left:798px;top:678px">Inactif</div>
<svg style="left:369px;top:695px" width="16" height="17"><use href="#port"/></svg>
<div class="t" style="left:387px;top:697px">WAN Miniport (IKEv2) (VPN2-72)</div>
<div class="t" style="left:581px;top:697px">VPN</div>
<div class="t" style="left:693px;top:697px">Accès à distanc...</div>
<div class="t" style="left:798px;top:697px">Inactif</div>
<svg style="left:369px;top:714px" width="16" height="17"><use href="#port"/></svg>
<div class="t" style="left:387px;top:716px">WAN Miniport (IKEv2) (VPN2-71)</div>
<div class="t" style="left:581px;top:716px">VPN</div>
<div class="t" style="left:693px;top:716px">Accès à distanc...</div>
<div class="t" style="left:798px;top:716px">Inactif</div>
<svg style="left:369px;top:733px" width="16" height="17"><use href="#port"/></svg>
<div class="t" style="left:387px;top:735px">WAN Miniport (IKEv2) (VPN2-70)</div>
<div class="t" style="left:581px;top:735px">VPN</div>
<div class="t" style="left:693px;top:735px">Accès à distanc...</div>
<div class="t" style="left:798px;top:735px">Inactif</div>
<svg style="left:369px;top:752px" width="16" height="17"><use href="#port"/></svg>
<div class="t" style="left:387px;top:754px">WAN Miniport (IKEv2) (VPN2-7)</div>
<div class="t" style="left:581px;top:754px">VPN</div>
<div class="t" style="left:693px;top:754px">Accès à distanc...</div>
<div class="t" style="left:798px;top:754px">Inactif</div>
<svg style="left:369px;top:771px" width="16" height="17"><use href="#port"/></svg>
<div class="t" style="left:387px;top:773px">WAN Miniport (IKEv2) (VPN2-69)</div>
<div class="t" style="left:581px;top:773px">VPN</div>
<div class="t" style="left:693px;top:773px">Accès à distanc...</div>
<div class="t" style="left:798px;top:773px">Inactif</div>
<svg style="left:369px;top:790px" width="16" height="17"><use href="#port"/></svg>
<div class="t" style="left:387px;top:792px">WAN Miniport (IKEv2) (VPN2-68)</div>
<div class="t" style="left:581px;top:792px">VPN</div>
<div class="t" style="left:693px;top:792px">Accès à distanc...</div>
<div class="t" style="left:798px;top:792px">Inactif</div>
<svg style="left:369px;top:809px" width="16" height="17"><use href="#port"/></svg>
<div class="t" style="left:387px;top:811px">WAN Miniport (IKEv2) (VPN2-67)</div>
<div class="t" style="left:581px;top:811px">VPN</div>
<div class="t" style="left:693px;top:811px">Accès à distanc...</div>
<div class="t" style="left:798px;top:811px">Inactif</div>
<svg style="left:369px;top:828px" width="16" height="17"><use href="#port"/></svg>
<div class="t" style="left:387px;top:830px">WAN Miniport (IKEv2) (VPN2-66)</div>
<div class="t" style="left:581px;top:830px">VPN</div>
<div class="t" style="left:693px;top:830px">Accès à distanc...</div>
<div class="t" style="left:798px;top:830px">Inactif</div>
</div>
<div class="a" style="left:1874px;top:100px;width:16px;height:745px;background:#f0f0f0"></div>
<div class="a" style="left:1881px;top:118px;width:2px;height:102px;background:#858585;border-radius:1px"></div>
<div class="a" style="left:0;top:846px;width:1892px;height:24px;background:#f0f0f0"></div>
<div class="a" style="left:0;top:869px;width:1892px;height:1px;background:#c8c4c0"></div>
<div class="a" style="left:1671px;top:848px;width:1px;height:19px;background:#d7d7d7"></div>
<div class="a" style="left:1804px;top:848px;width:1px;height:19px;background:#d7d7d7"></div>
<div class="a" style="left:1889px;top:848px;width:1px;height:19px;background:#d7d7d7"></div>
<div class="a" style="left:746px;top:143px;width:400px;height:476px;background:#f0f0f0;border:1px solid #c6c6c6"></div>
<div class="a" style="left:747px;top:144px;width:398px;height:30px;background:#f3f3f3"></div>
<div class="t" style="left:755px;top:151px;color:#1a1a1a">Propriétés de : Ports</div>
<svg style="left:1073px;top:152px" width="10" height="12" viewBox="0 0 10 12"><path d="M2.2 3.3C2.2 0.6 7.6 0.4 7.6 3.2C7.6 5.2 4.9 5.4 4.9 7.8" fill="none" stroke="#000" stroke-width="1.25"/><rect x="4.2" y="9.4" width="1.5" height="1.5" fill="#000"/></svg>
<svg style="left:1117px;top:153px" width="10" height="10" viewBox="0 0 10 10"><path d="M0.3 0.3L9.7 9.7M9.7 0.3L0.3 9.7" stroke="#000" stroke-width="1"/></svg>
<div class="a" style="left:753px;top:181px;width:80px;height:22px;background:#f9f9f9;border:1px solid #e3e3e3;border-bottom:none"></div>
<div class="a" style="left:753px;top:200px;width:384px;height:381px;background:#f9f9f9;border:1px solid #e3e3e3"></div>
<div class="a" style="left:754px;top:181px;width:78px;height:21px;background:#f9f9f9"></div>
<div class="a" style="left:756px;top:203px;width:379px;height:375px;background:#f0f0f0"></div>
<div class="t" style="left:761px;top:183px;font-size:11px">Périphériques</div>
<div class="t" style="left:768px;top:214px;font-size:11px;line-height:13px">Le routage et l’accès à distance (RRAS) utilisent les périphériques listés<br>ci-dessous.</div>
<div class="a" style="left:768px;top:252px;width:356px;height:254px;background:#fff;border:1px solid;border-color:#a0a0a0 #fff #fff #a0a0a0"></div>
<div class="a" style="left:769px;top:253px;width:354px;height:252px;border:1px solid;border-color:#696969 #e3e3e3 #e3e3e3 #696969"></div>
<div class="a" style="left:770px;top:254px;width:352px;height:17px;background:#f0f0f0;border-top:1px solid #fff;border-left:1px solid #fff;border-bottom:2px solid;border-bottom-color:#a0a0a0"></div>
<div class="a" style="left:891px;top:254px;width:1px;height:16px;background:#a0a0a0"></div><div class="a" style="left:892px;top:254px;width:1px;height:16px;background:#fff"></div>
<div class="a" style="left:1036px;top:254px;width:1px;height:16px;background:#a0a0a0"></div><div class="a" style="left:1037px;top:254px;width:1px;height:16px;background:#fff"></div>
<div class="a" style="left:1077px;top:254px;width:1px;height:16px;background:#a0a0a0"></div><div class="a" style="left:1078px;top:254px;width:1px;height:16px;background:#fff"></div>
<div class="a" style="left:1118px;top:254px;width:1px;height:16px;background:#a0a0a0"></div><div class="a" style="left:1119px;top:254px;width:1px;height:16px;background:#fff"></div>
<div class="t" style="left:776px;top:255px;font-size:11px;line-height:14px">Nom</div>
<div class="t" style="left:899px;top:255px;font-size:11px;line-height:14px">Utilisé par</div>
<div class="t" style="left:1044px;top:255px;font-size:11px;line-height:14px">Type</div>
<div class="t" style="left:1085px;top:255px;font-size:11px;line-height:14px">No...</div>
<div class="a" style="left:772px;top:287px;width:348px;height:14px;background:#0078d7"></div>
<div class="t" style="left:774px;top:273px;font-size:11px;line-height:14px;color:#000">WAN Miniport (SSTP)</div>
<div class="t" style="left:899px;top:273px;font-size:11px;line-height:14px;color:#000">Aucun</div>
<div class="t" style="left:1044px;top:273px;font-size:11px;line-height:14px;color:#000">SSTP</div>
<div class="t" style="left:1085px;top:273px;font-size:11px;line-height:14px;color:#000">0</div>
<div class="t" style="left:774px;top:287px;font-size:11px;line-height:14px;color:#fff">WAN Miniport (IKEv2)</div>
<div class="t" style="left:899px;top:287px;font-size:11px;line-height:14px;color:#fff">Accès à distance/routage</div>
<div class="t" style="left:1044px;top:287px;font-size:11px;line-height:14px;color:#fff">IKEv2</div>
<div class="t" style="left:1085px;top:287px;font-size:11px;line-height:14px;color:#fff">128</div>
<div class="t" style="left:774px;top:301px;font-size:11px;line-height:14px;color:#000">WAN Miniport (L2TP)</div>
<div class="t" style="left:899px;top:301px;font-size:11px;line-height:14px;color:#000">Aucun</div>
<div class="t" style="left:1044px;top:301px;font-size:11px;line-height:14px;color:#000">L2TP</div>
<div class="t" style="left:1085px;top:301px;font-size:11px;line-height:14px;color:#000">0</div>
<div class="t" style="left:774px;top:315px;font-size:11px;line-height:14px;color:#000">WAN Miniport (PPTP)</div>
<div class="t" style="left:899px;top:315px;font-size:11px;line-height:14px;color:#000">Aucun</div>
<div class="t" style="left:1044px;top:315px;font-size:11px;line-height:14px;color:#000">PPTP</div>
<div class="t" style="left:1085px;top:315px;font-size:11px;line-height:14px;color:#000">0</div>
<div class="t" style="left:774px;top:329px;font-size:11px;line-height:14px;color:#000">WAN Miniport (PPPOE)</div>
<div class="t" style="left:899px;top:329px;font-size:11px;line-height:14px;color:#000">Routage</div>
<div class="t" style="left:1044px;top:329px;font-size:11px;line-height:14px;color:#000">PP...</div>
<div class="t" style="left:1085px;top:329px;font-size:11px;line-height:14px;color:#000">1</div>
<div class="t" style="left:774px;top:343px;font-size:11px;line-height:14px;color:#000">WAN Miniport (GRE)</div>
<div class="t" style="left:899px;top:343px;font-size:11px;line-height:14px;color:#000">Routage</div>
<div class="t" style="left:1044px;top:343px;font-size:11px;line-height:14px;color:#000">Inc...</div>
<div class="t" style="left:1085px;top:343px;font-size:11px;line-height:14px;color:#000">128</div>
<div class="a" style="left:768px;top:518px;width:91px;height:23px;background:#f0f0f0;border:1px solid;border-color:#fff #696969 #696969 #fff"></div>
<div class="t" style="left:784px;top:522px;font-size:11px;line-height:14px">Configurer...</div>
<div class="a" style="left:903px;top:589px;width:73px;height:21px;background:#fdfdfd;border:1px solid #0067c0;border-radius:4px;box-shadow:inset 0 -1px 0 #0067c0"></div>
<div class="t" style="left:903px;top:593px;width:73px;text-align:center;font-size:11px;line-height:14px">OK</div>
<div class="a" style="left:984px;top:589px;width:73px;height:21px;background:#fdfdfd;border:1px solid #c8c8c8;border-bottom-color:#b0b0b0;border-radius:4px"></div>
<div class="t" style="left:984px;top:593px;width:73px;text-align:center;font-size:11px;line-height:14px">Annuler</div>
<div class="a" style="left:1065px;top:589px;width:73px;height:21px;background:#fdfdfd;border:1px solid #c8c8c8;border-bottom-color:#b0b0b0;border-radius:4px"></div>
<div class="t" style="left:1065px;top:593px;width:73px;text-align:center;font-size:11px;line-height:14px">Appliquer</div>
<div class="a" style="left:890px;top:577px;width:27px;height:27px;border-radius:50%;background:#ee4343;box-shadow:-1px 2px 3px rgba(0,0,0,.4)"></div>
<div class="t" style="left:890px;top:579px;width:27px;text-align:center;color:#fff;font-size:20px;line-height:24px;letter-spacing:0">2</div>
<div class="a" style="left:1055px;top:562px;width:27px;height:27px;border-radius:50%;background:#ee4343;box-shadow:-1px 2px 3px rgba(0,0,0,.4)"></div>
<div class="t" style="left:1055px;top:564px;width:27px;text-align:center;color:#fff;font-size:20px;line-height:24px;letter-spacing:0">1</div></body></html>
